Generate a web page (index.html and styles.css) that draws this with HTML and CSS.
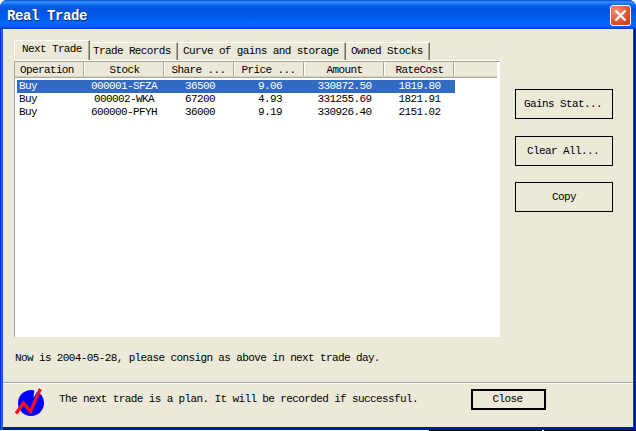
FILE: index.html
```html
<!DOCTYPE html>
<html lang="en">
<head>
<meta charset="utf-8">
<title>Real Trade</title>
<link rel="stylesheet" href="styles.css">
</head>
<body>
<div class="window">
  <header class="titlebar">
    <h1>Real Trade</h1>
    <button class="x" aria-label="Close window"><svg width="21" height="21" viewBox="0 0 21 21"><path d="M5.5 5.5l10 10M15.5 5.5l-10 10" stroke="#fff" stroke-width="2.3"/></svg></button>
  </header>
  <div class="client">
    <main class="main">
      <section class="panel">
        <nav class="tabs">
          <span class="tab active">Next Trade</span>
          <span class="tab records">Trade Records</span>
          <span class="tab curve">Curve of gains and storage</span>
          <span class="tab owned">Owned Stocks</span>
        </nav>
        <div class="list">
          <div class="row head"><span>Operation</span><span>Stock</span><span>Share ...</span><span>Price ...</span><span>Amount</span><span>RateCost</span></div>
          <div class="rows">
            <div class="row selected"><span>Buy</span><span>000001-SFZA</span><span>36500</span><span>9.06</span><span>330872.50</span><span>1819.80</span></div>
            <div class="row"><span>Buy</span><span>000002-WKA</span><span>67200</span><span>4.93</span><span>331255.69</span><span>1821.91</span></div>
            <div class="row"><span>Buy</span><span>600000-PFYH</span><span>36000</span><span>9.19</span><span>330926.40</span><span>2151.02</span></div>
          </div>
        </div>
      </section>
      <aside class="actions">
        <button class="btn">Gains Stat...</button>
        <button class="btn">Clear All...</button>
        <button class="btn">Copy</button>
      </aside>
    </main>
    <p class="note">Now is 2004-05-28, please consign as above in next trade day.</p>
    <footer class="footer">
      <svg class="logo" width="30" height="32" viewBox="0 0 30 32"><circle cx="17" cy="17" r="13" fill="#00f"/><path d="M20.5 3L19.5 12l5-9z" fill="#ece9d8"/><path d="M2 27.5L9.5 17l7 8.5L26.3 3" fill="none" stroke="#f5101c" stroke-width="3.2"/></svg>
      <p class="plan">The next trade is a plan. It will be recorded if successful.</p>
      <button class="btn close">Close</button>
    </footer>
  </div>
</div>
<div class="strip"><i></i><i></i></div>
</body>
</html>
```

FILE: styles.css
```css
* { box-sizing: border-box; }
body {
  margin: 0;
  width: 636px;
  height: 431px;
  overflow: hidden;
  background: #fff;
  color: #000;
  font: 11px/13px "Liberation Mono", monospace;
  letter-spacing: -0.62px;
}
p, h1 { margin: 0; }
button { font: inherit; letter-spacing: inherit; color: inherit; padding: 0; }
.window {
  height: 430px;
  display: flex;
  flex-direction: column;
  border-radius: 7px 7px 0 0;
  overflow: hidden;
  background: linear-gradient(90deg, #0831d9 1px, #1660e8 1px 3px, #001a9c 3px);
}
.titlebar {
  height: 29px;
  flex: none;
  display: flex;
  align-items: center;
  justify-content: space-between;
  padding: 2px 5px 0 7px;
  background: linear-gradient(#0848c8 0, #3a94ff 2px, #0a64ee 5px, #0054e0 9px, #0058ea 16px, #0268fe 23px, #0264fa 26px, #0042c8 29px);
}
h1 {
  font-size: 14px;
  line-height: 18px;
  letter-spacing: -0.4px;
  color: #fff;
  text-shadow: 1px 1px #0a2a80;
}
.x {
  width: 21px;
  height: 21px;
  border: 1px solid #fff;
  border-radius: 3px;
  background: radial-gradient(circle at 30% 25%, #f09078, #e0502c 60%, #c83c14);
}
.x svg { display: block; margin: -1px; }
.client {
  flex: 1;
  display: flex;
  flex-direction: column;
  margin: 0 3px 3px;
  background: #ece9d8;
  box-shadow: 1px 0 #0a40d0;
}
.main { display: flex; padding: 11px 0 0 11px; height: 308px; }
.panel { width: 486px; display: flex; flex-direction: column; }
.tabs { height: 20px; display: flex; align-items: flex-end; }
.tab {
  height: 18px;
  padding: 2px 0 0 4px;
  border-top: 1px solid #fff;
  border-right: 1px solid #716f64;
  box-shadow: inset -1px 0 #aca899;
  white-space: nowrap;
}
.tab.active { height: 20px; width: 76px; padding-left: 7px; border-left: 1px solid #fff; }
.records { width: 88px; padding-left: 3px; }
.curve { width: 168px; padding-left: 5px; }
.owned { width: 84px; padding-left: 5px; }
.list {
  flex: 1;
  background: #fff;
  border-top: 1px solid #fff;
  border-left: 1px solid #aca899;
  box-shadow: inset 0 1px #aca899;
  padding-top: 1px;
}
.row {
  display: grid;
  grid-template-columns: 69px 80px 70px 70px 80px 70px;
  height: 13px;
}
.row span { text-align: center; white-space: pre; }
.row span:first-child { text-align: left; }
.head { height: 16px; width: 482px; background: #ece9d8; border-bottom: 1px solid #aca899; box-shadow: inset 0 -1px #d8d4c2; }
.head span { padding-top: 2px; border-right: 1px solid #aca899; box-shadow: 1px 0 #fff; height: 14px; }
.head span:first-child { padding-left: 5px; }
.head span:nth-child(2), .head span:nth-child(5), .head span:nth-child(6) { padding-left: 2px; }
.rows { padding: 2px 0 0 2px; }
.rows .row { width: 438px; grid-template-columns: 67px 80px 70px 70px 80px 71px; }
.rows .row span { line-height: 13px; }
.rows .row span:first-child { padding-left: 2px; }
.rows .row span:nth-child(3), .rows .row span:nth-child(4) { padding-left: 2px; }
.rows .row span:nth-child(5) { padding-left: 1px; }
.selected { background: #316ac5; color: #fff; }
.actions { margin: 49px 0 0 15px; display: flex; flex-direction: column; gap: 17px; }
.btn { width: 98px; height: 30px; background: #ece9d8; border: 1px solid #000; border-radius: 0; }
.btn:first-child { padding-right: 2px; }
.btn:nth-child(2) { padding-right: 2px; }
.actions .btn:last-child { margin-top: -1px; }
.note { height: 45px; padding: 15px 0 0 12px; }
.footer {
  flex: 1;
  display: flex;
  border-top: 1px solid #aca899;
  box-shadow: inset 0 1px #fff;
}
.logo { margin: 3px 0 0 11px; }
.plan { width: 412px; padding: 10px 0 0 15px; white-space: nowrap; }
.btn.close { width: 75px; height: 21px; margin: 6px 0 0 15px; border-width: 2px; padding-right: 2px; }
.strip { height: 1px; display: flex; gap: 2px; padding-left: 429px; }
.strip i { width: 113px; background: #000; }
.strip i:last-child { flex: 1; }
```
